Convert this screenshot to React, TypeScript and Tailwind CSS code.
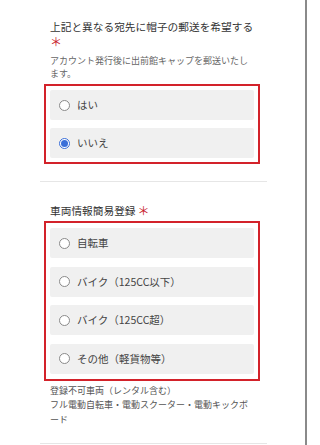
import React from "react";

const font = { fontFamily: '"Noto Sans CJK JP", "Noto Sans", sans-serif' };

function Radio({ label, checked }: { label: string; checked?: boolean }) {
  return (
    <div className="flex h-[30px] items-center rounded-[2px] bg-[#f0f0f0] pl-[9px]">
      {checked ? (
        <span className="flex h-[11px] w-[11px] items-center justify-center rounded-full border border-[#3a6fd9] bg-white">
          <span className="h-[7px] w-[7px] rounded-full bg-[#3a6fd9]" />
        </span>
      ) : (
        <span className="h-[11px] w-[11px] rounded-full border border-[#8a8a8a] bg-white" />
      )}
      <span className="ml-[7px] text-[10.5px] leading-[14px] text-[#444]">{label}</span>
    </div>
  );
}

export default function App() {
  return (
    <div
      className="h-[445px] w-[307px] overflow-hidden border-r-2 border-[#8a8a8a] bg-white"
      style={font}
    >
      <div className="ml-[40px] w-[227px]">
        {/* Section 1 */}
        <div className="pt-[20px]">
          <div className="px-[10px]">
            <div className="whitespace-nowrap text-[10.7px] leading-[14px] text-[#333]">
              上記と異なる宛先に帽子の郵送を希望する
            </div>
            <div className="mt-[1px] text-[12px] leading-[14px] text-[#c8202a]">＊</div>
            <div className="mt-[5px] text-[9px] leading-[13px] text-[#666]">
              アカウント発行後に出前館キャップを郵送いたし
              <br />
              ます。
            </div>
          </div>
          <div className="ml-[4px] mt-[4px] flex w-[216px] flex-col gap-[8px] border-2 border-[#d3222a] px-[4px] py-[4px]">
            <Radio label="はい" />
            <Radio label="いいえ" checked />
          </div>
        </div>

        <div className="mt-[17px] h-px bg-[#e6e6e6]" />

        {/* Section 2 */}
        <div className="pt-[22px]">
          <div className="flex items-center px-[10px]">
            <span className="whitespace-nowrap text-[10.7px] leading-[14px] text-[#333]">
              車両情報簡易登録
            </span>
            <span className="ml-[2px] text-[12px] leading-[14px] text-[#c8202a]">＊</span>
          </div>
          <div className="ml-[4px] mt-[3px] flex w-[216px] flex-col gap-[8.5px] border-2 border-[#d3222a] px-[4px] py-[5px]">
            <Radio label="自転車" />
            <Radio label="バイク（125CC以下）" />
            <Radio label="バイク（125CC超）" />
            <Radio label="その他（軽貨物等）" />
          </div>
          <div className="mt-[3px] px-[10px] text-[9px] leading-[14.5px] text-[#555]">
            登録不可車両（レンタル含む）
            <br />
            フル電動自転車・電動スクーター・電動キックボ
            <br />
            ード
          </div>
        </div>

        <div className="mt-[16px] h-px bg-[#e6e6e6]" />
      </div>
    </div>
  );
}
